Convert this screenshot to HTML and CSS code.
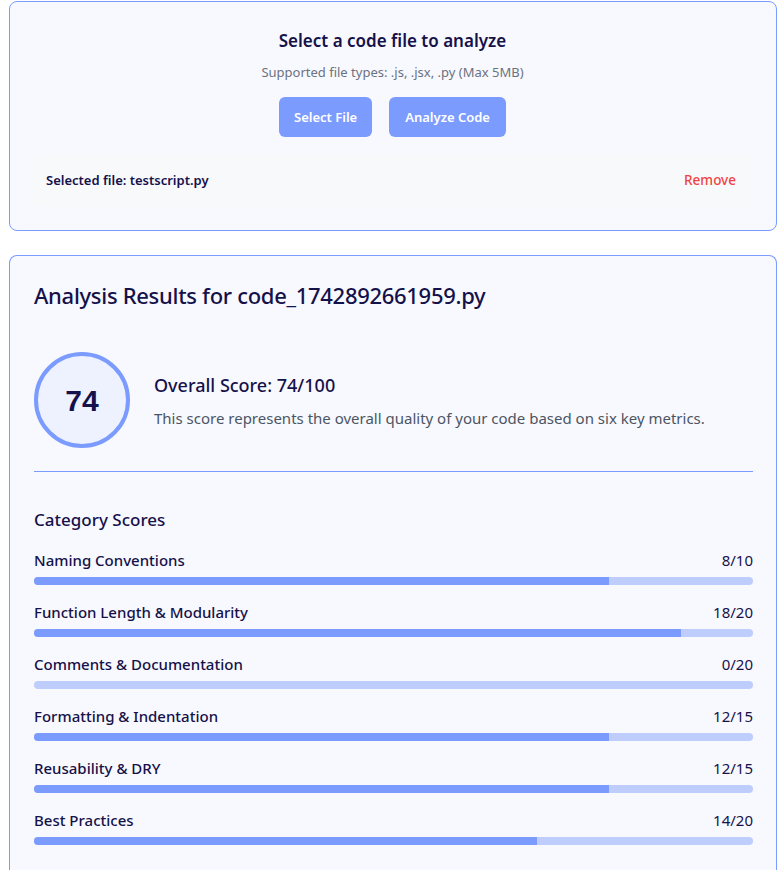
FILE: index.html
```html
<!DOCTYPE html>
<html>
<head>
<meta charset="utf-8">
<link rel="stylesheet" href="styles.css">
</head>
<body>
<div class="page">
  <section class="card upload">
    <h2 class="upload-title">Select a code file to analyze</h2>
    <p class="upload-sub">Supported file types: .js, .jsx, .py (Max 5MB)</p>
    <div class="btns">
      <button class="btn">Select File</button>
      <button class="btn">Analyze Code</button>
    </div>
    <div class="selected">
      <span class="sel-name">Selected file: testscript.py</span>
      <span class="remove">Remove</span>
    </div>
  </section>

  <section class="card results">
    <h1 class="res-title">Analysis Results for code_1742892661959.py</h1>
    <div class="overall">
      <div class="circle">74</div>
      <div class="overall-text">
        <h3 class="overall-title">Overall Score: 74/100</h3>
        <p class="overall-desc">This score represents the overall quality of your code based on six key metrics.</p>
      </div>
    </div>
    <h3 class="cat-title">Category Scores</h3>
    <div class="cats">
      <div class="cat">
        <div class="cat-row"><span class="cat-name">Naming Conventions</span><span class="cat-score">8/10</span></div>
        <div class="track"><div class="fill" style="width:80%"></div></div>
      </div>
      <div class="cat">
        <div class="cat-row"><span class="cat-name">Function Length &amp; Modularity</span><span class="cat-score">18/20</span></div>
        <div class="track"><div class="fill" style="width:90%"></div></div>
      </div>
      <div class="cat">
        <div class="cat-row"><span class="cat-name">Comments &amp; Documentation</span><span class="cat-score">0/20</span></div>
        <div class="track"><div class="fill" style="width:0%"></div></div>
      </div>
      <div class="cat">
        <div class="cat-row"><span class="cat-name">Formatting &amp; Indentation</span><span class="cat-score">12/15</span></div>
        <div class="track"><div class="fill" style="width:80%"></div></div>
      </div>
      <div class="cat">
        <div class="cat-row"><span class="cat-name">Reusability &amp; DRY</span><span class="cat-score">12/15</span></div>
        <div class="track"><div class="fill" style="width:80%"></div></div>
      </div>
      <div class="cat">
        <div class="cat-row"><span class="cat-name">Best Practices</span><span class="cat-score">14/20</span></div>
        <div class="track"><div class="fill" style="width:70%"></div></div>
      </div>
    </div>
  </section>
</div>
</body>
</html>
```

FILE: styles.css
```css
* { box-sizing: border-box; }
html, body { margin: 0; padding: 0; background: #ffffff; }
body {
  font-family: "Noto Sans", "Open Sans", sans-serif;
  color: #15114a;
}
.page {
  padding: 1px 6px 0 9px;
  display: flex;
  flex-direction: column;
  gap: 24px;
}
.card {
  width: 768px;
  border: 1px solid #7b9bff;
  border-radius: 8px;
  background: #f8f9fe;
}
.upload {
  height: 230px;
  padding: 22px 23px 0 22px;
  text-align: center;
}
.upload-title {
  margin: 0;
  font-size: 17px;
  font-weight: 600;
  line-height: 34px;
}
.upload-sub {
  margin: 5px 0 0;
  font-size: 13px;
  color: #6b7280;
  line-height: 18px;
}
.btns {
  display: flex;
  justify-content: center;
  gap: 17px;
  margin-top: 16px;
}
.btn {
  border: none;
  background: #7b9bff;
  color: #ffffff;
  font-family: inherit;
  font-size: 13px;
  font-weight: 600;
  height: 40px;
  padding: 0 15px;
  border-radius: 6px;
}
.btn + .btn { padding: 0 16px; }
.selected {
  margin-top: 17px;
  height: 53px;
  background: #f8f9fb;
  border-radius: 4px;
  display: flex;
  justify-content: space-between;
  align-items: center;
  padding: 0 17px 2px 14px;
  font-size: 13px;
  font-weight: 600;
}
.remove { color: #ef4444; font-weight: 500; font-size: 13.5px; }
.results {
  padding: 24px 23px 40px 24px;
  border-bottom: none;
  border-radius: 8px 8px 0 0;
}
.res-title {
  margin: 0;
  font-size: 22px;
  font-weight: 500;
  line-height: 30px;
  letter-spacing: -0.3px;
}
.overall {
  display: flex;
  align-items: center;
  gap: 24px;
  margin-top: 42px;
  padding-bottom: 23px;
  border-bottom: 1px solid #7b9bff;
}
.circle {
  width: 96px;
  height: 96px;
  flex: none;
  border-radius: 50%;
  border: 4px solid #7b9bff;
  background: #eef2ff;
  display: flex;
  align-items: center;
  justify-content: center;
  font-family: "Liberation Sans", Arial, sans-serif;
  font-weight: 700;
  font-size: 30px;
  color: #15114a;
  padding-top: 2px;
}
.overall-title {
  margin: 0 0 8px;
  font-size: 18px;
  font-weight: 500;
  line-height: 26px;
}
.overall-desc {
  margin: 0;
  font-size: 15px;
  color: #4b5563;
  line-height: 22px;
  padding-top: 1px;
}
.cat-title {
  margin: 36px 0 0;
  font-size: 17px;
  font-weight: 500;
  line-height: 24px;
}
.cats {
  margin-top: 17px;
  display: flex;
  flex-direction: column;
  gap: 16px;
}
.cat-row {
  display: flex;
  justify-content: space-between;
  font-size: 15px;
  line-height: 22px;
}
.cat-name { font-weight: 500; }
.cat-score { font-weight: 400; }
.track {
  margin-top: 6px;
  height: 8px;
  border-radius: 4px;
  background: #bfcdfd;
  overflow: hidden;
}
.fill {
  height: 100%;
  background: #7b9bff;
}
```
